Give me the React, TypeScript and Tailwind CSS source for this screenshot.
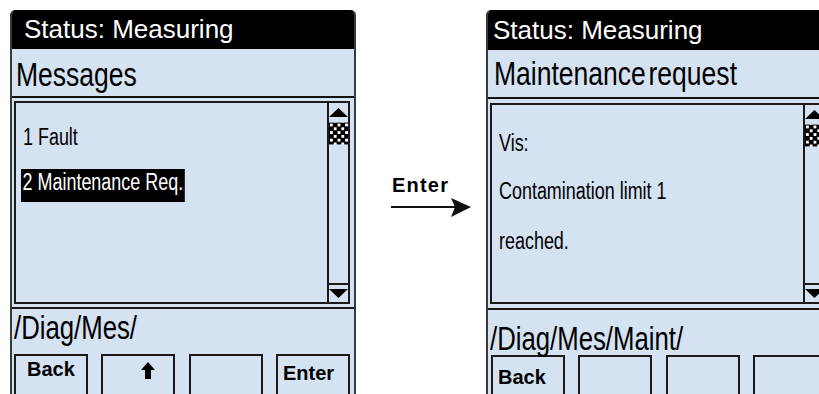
import React from "react";

const arial = "font-['Liberation_Sans',Arial,sans-serif]";

function N({ children, className = "" }: { children: React.ReactNode; className?: string }) {
  return (
    <span className={`inline-block origin-left scale-x-[0.78] whitespace-nowrap ${arial} ${className}`}>
      {children}
    </span>
  );
}

function Checker() {
  return (
    <svg width="20" height="23" viewBox="0 0 20 23" className="block">
      <defs>
        <pattern id="chk" width="8" height="8" patternUnits="userSpaceOnUse">
          <rect width="8" height="8" fill="#000" />
          <rect x="1" y="1" width="3" height="3" fill="#fff" />
          <rect x="5" y="5" width="3" height="3" fill="#fff" />
        </pattern>
      </defs>
      <rect width="20" height="23" fill="url(#chk)" />
    </svg>
  );
}

function ScrollBar() {
  return (
    <div className="w-[21px] shrink-0 border-l-2 border-[#1a1a1a] flex flex-col">
      <div className="pt-[5px] flex justify-center">
        <svg width="19" height="9" viewBox="0 0 19 9" className="block">
          <polygon points="9.5,0 19,9 0,9" fill="#000" />
        </svg>
      </div>
      <div className="mt-[5px] flex justify-center">
        <Checker />
      </div>
      <div className="flex-1" />
      <div className="h-[19px] border-t-2 border-[#1a1a1a] flex justify-center pt-[4px]">
        <svg width="19" height="9" viewBox="0 0 19 9" className="block">
          <polygon points="0,0 19,0 9.5,9" fill="#000" />
        </svg>
      </div>
    </div>
  );
}

function UpArrow() {
  return (
    <svg width="14" height="17" viewBox="0 0 14 17" className="block">
      <polygon points="7,0 14,8 10,8 10,17 4,17 4,8 0,8" fill="#000" />
    </svg>
  );
}

type Btn = { label?: React.ReactNode; cls?: string };

function Panel(props: {
  statusH: string;
  statusPl: string;
  statusPt: string;
  title: React.ReactNode;
  titlePl: string;
  titlePt: string;
  listMt: string;
  listH: string;
  items: React.ReactNode;
  sepMt: string;
  path: string;
  pathPt: string;
  pathH: string;
  btnMl: string;
  buttons: Btn[];
}) {
  return (
    <div className="w-[346px] h-[420px] shrink-0 bg-[#d4e2f2] border-x-2 border-[#3a3a3a] rounded-t-[5px] overflow-hidden flex flex-col">
      <div className={`${props.statusH} bg-black text-white text-[26px] leading-none ${arial} ${props.statusPl} ${props.statusPt}`}>
        Status: Measuring
      </div>
      <div className={`h-[49px] border-b-2 border-[#111] text-[34px] leading-none text-black ${props.titlePl} ${props.titlePt}`}>
        {props.title}
      </div>
      <div className={`${props.listMt} ${props.listH} ml-[2px] mr-[4px] border-2 border-[#1a1a1a] flex`}>
        <div className="flex-1 text-[23px] leading-none text-black">{props.items}</div>
        <ScrollBar />
      </div>
      <div className={`${props.sepMt} border-t-2 border-[#1a1a1a]`} />
      <div className={`${props.pathH} ${props.pathPt} pl-[2px] text-[33px] leading-none text-black`}>
        <N>{props.path}</N>
      </div>
      <div className={`flex gap-[13.33px] ${props.btnMl}`}>
        {props.buttons.map((b, i) => (
          <div
            key={i}
            className={`w-[74px] h-[60px] shrink-0 border-2 border-[#1a1a1a] ${arial} font-bold text-[20px] leading-none text-black ${b.cls ?? ""}`}
          >
            {b.label}
          </div>
        ))}
      </div>
    </div>
  );
}

export default function App() {
  return (
    <div className="w-[819px] h-[394px] overflow-hidden bg-white flex pt-[10px] pl-[10px]">
      <Panel
        statusH="h-[39px]"
        statusPl="pl-[12px]"
        statusPt="pt-[6px]"
        title={<N>Messages</N>}
        titlePl="pl-[4px]"
        titlePt="pt-[7px]"
        listMt="mt-[3px]"
        listH="h-[203px]"
        items={
          <div className="pt-[22px]">
            <div className="pl-[7px] h-[23px]">
              <N>1 Fault</N>
            </div>
            <div className="mt-[21px] ml-[5px] h-[33px]">
              <N className="h-[33px] pt-[2px] pl-[2px] pr-[2px] bg-black text-white">2 Maintenance Req.</N>
            </div>
          </div>
        }
        sepMt="mt-[3px]"
        path="/Diag/Mes/"
        pathPt="pt-[1px]"
        pathH="h-[45px]"
        btnMl="ml-[2px]"
        buttons={[
          { label: "Back", cls: "pl-[11px] pt-[3px]" },
          { label: <UpArrow />, cls: "pl-[38px] pt-[6px]" },
          {},
          { label: "Enter", cls: "pl-[5px] pt-[7px]" },
        ]}
      />
      <div className="w-[130px] shrink-0 pt-[165px] pl-[36px]">
        <div className={`${arial} font-bold text-[20px] leading-none tracking-[1.2px] text-black`}>Enter</div>
        <svg width="82" height="20" viewBox="0 0 82 20" className="block mt-[3px] ml-[-1px]">
          <line x1="0" y1="9" x2="66" y2="9" stroke="#111" strokeWidth="2" />
          <polygon points="60,0 80,9 60,19 64,9" fill="#111" />
        </svg>
      </div>
      <Panel
        statusH="h-[40px]"
        statusPl="pl-[5px]"
        statusPt="pt-[7px]"
        title={<N className="[word-spacing:-6px]">Maintenance request</N>}
        titlePl="pl-[6px]"
        titlePt="pt-[5px]"
        listMt="mt-[4px]"
        listH="h-[201px]"
        items={
          <div className="pt-[26px] pl-[7px]">
            <div className="h-[23px]">
              <N>Vis:</N>
            </div>
            <div className="mt-[25px] h-[23px]">
              <N>Contamination limit 1</N>
            </div>
            <div className="mt-[27px] h-[23px]">
              <N>reached.</N>
            </div>
          </div>
        }
        sepMt="mt-[4px]"
        path="/Diag/Mes/Maint/"
        pathPt="pt-[11px]"
        pathH="h-[45px]"
        btnMl="ml-[3px]"
        buttons={[{ label: "Back", cls: "pl-[5px] pt-[10px]" }, {}, {}, {}]}
      />
    </div>
  );
}
